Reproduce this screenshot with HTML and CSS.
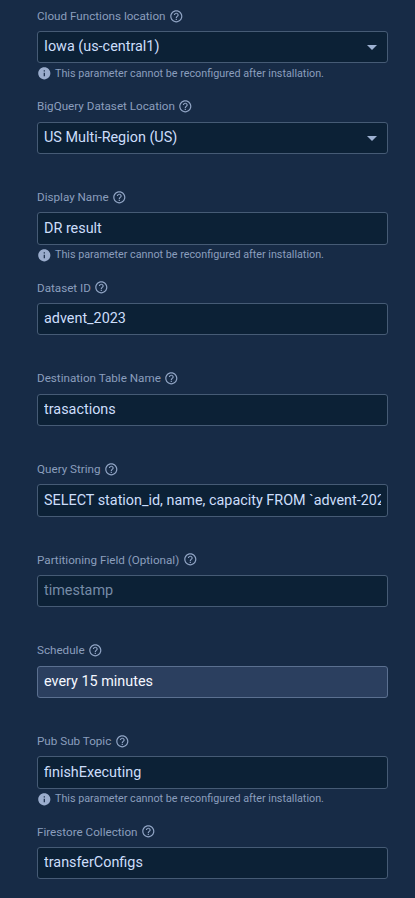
FILE: index.html
```
<!DOCTYPE html>
<html lang="en">
<head>
<meta charset="utf-8">
<title>Extension parameters</title>
<link rel="stylesheet" href="styles.css">
</head>
<body>
<svg class="symbols" width="0" height="0" aria-hidden="true">
  <symbol id="help" viewBox="0 0 24 24"><path d="M11 18h2v-2h-2v2zm1-16C6.480 2 2 6.480 2 12s4.480 10 10 10 10-4.480 10-10S17.520 2 12 2zm0 18c-4.410 0-8-3.590-8-8s3.590-8 8-8 8 3.590 8 8-3.590 8-8 8zm0-14c-2.210 0-4 1.790-4 4h2c0-1.100.9-2 2-2s2 .9 2 2c0 2-3 1.750-3 5h2c0-2.250 3-2.500 3-5 0-2.210-1.790-4-4-4z"/></symbol>
  <symbol id="info" viewBox="0 0 24 24"><path d="M12 2C6.480 2 2 6.480 2 12s4.480 10 10 10 10-4.480 10-10S17.520 2 12 2zm1 15h-2v-6h2v6zm0-8h-2V7h2v2z"/></symbol>
</svg>
<main class="form">
  <section class="field">
    <div class="label"><span>Cloud Functions location</span><svg class="help"><use href="#help"/></svg></div>
    <div class="control"><span class="value">Iowa (us-central1)</span><i class="arrow"></i></div>
    <div class="hint"><svg class="info"><use href="#info"/></svg><span>This parameter cannot be reconfigured after installation.</span></div>
  </section>
  <section class="field">
    <div class="label"><span>BigQuery Dataset Location</span><svg class="help"><use href="#help"/></svg></div>
    <div class="control"><span class="value">US Multi-Region (US)</span><i class="arrow"></i></div>
  </section>
  <section class="field">
    <div class="label"><span>Display Name</span><svg class="help"><use href="#help"/></svg></div>
    <div class="control"><span class="value">DR result</span></div>
    <div class="hint"><svg class="info"><use href="#info"/></svg><span>This parameter cannot be reconfigured after installation.</span></div>
  </section>
  <section class="field">
    <div class="label"><span>Dataset ID</span><svg class="help"><use href="#help"/></svg></div>
    <div class="control"><span class="value">advent_2023</span></div>
  </section>
  <section class="field">
    <div class="label"><span>Destination Table Name</span><svg class="help"><use href="#help"/></svg></div>
    <div class="control"><span class="value">trasactions</span></div>
  </section>
  <section class="field">
    <div class="label"><span>Query String</span><svg class="help"><use href="#help"/></svg></div>
    <div class="control"><span class="value">SELECT station_id, name, capacity FROM `advent-202</span></div>
  </section>
  <section class="field">
    <div class="label"><span>Partitioning Field (Optional)</span><svg class="help"><use href="#help"/></svg></div>
    <div class="control"><span class="value placeholder">timestamp</span></div>
  </section>
  <section class="field">
    <div class="label"><span>Schedule</span><svg class="help"><use href="#help"/></svg></div>
    <div class="control autofilled"><span class="value">every 15 minutes</span></div>
  </section>
  <section class="field">
    <div class="label"><span>Pub Sub Topic</span><svg class="help"><use href="#help"/></svg></div>
    <div class="control"><span class="value">finishExecuting</span></div>
    <div class="hint"><svg class="info"><use href="#info"/></svg><span>This parameter cannot be reconfigured after installation.</span></div>
  </section>
  <section class="field">
    <div class="label"><span>Firestore Collection</span><svg class="help"><use href="#help"/></svg></div>
    <div class="control"><span class="value">transferConfigs</span></div>
  </section>
</main>
</body>
</html>
```
FILE: styles.css
```
* { box-sizing: border-box; }
html, body { margin: 0; height: 898px; overflow: hidden; }
body { background: #172b46; font-family: Roboto, sans-serif; }
.symbols { display: none; }
.form { padding: 0 27px 0 37px; }
.field { height: 90.67px; }
.label {
  display: flex; align-items: center; gap: 3.6px;
  height: 31px; padding-top: 0.6px;
  font-size: 11.67px; line-height: 14px; color: #8b9ebd;
}
.help { width: 14.6px; height: 14.6px; fill: #8fa3c3; }
.control {
  display: flex; align-items: center; justify-content: space-between;
  height: 32.4px; padding: 0.5px 6px 0;
  border: 1px solid #465b75; border-radius: 3px; background: #0c2136;
}
.value {
  overflow: hidden; white-space: nowrap;
  font-size: 14.4px; line-height: 20px; color: #ccdefb;
}
.placeholder { color: #768ba7; }
.autofilled { background: #2b3f5f; border-color: #5b7090; }
.autofilled .value { color: #f5f8ff; }
.arrow {
  flex: none; margin: 0 4.5px 0 0;
  border: 5px solid transparent; border-top-color: #9db1d2; border-bottom: 0;
}
.hint {
  display: flex; align-items: center; gap: 3.4px;
  height: 20.4px; font-size: 10.77px; white-space: nowrap; color: #8b9ebd;
}
.info { width: 14.6px; height: 14.6px; fill: #9badcd; }
```
